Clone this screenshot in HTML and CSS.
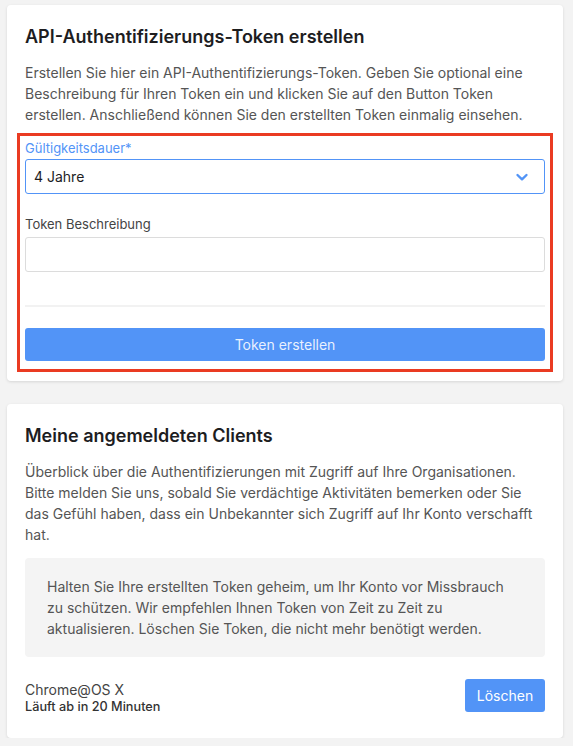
FILE: index.html
```html
<!DOCTYPE html>
<html lang="de">
    <head>
        <meta charset="UTF-8">
        <meta name="viewport" content="width=device-width, initial-scale=1.0">
        <title>API-Token</title>
        <link rel="stylesheet" href="styles.css">
    </head>
    <body>
        <section class="card">
            <h2 class="card-title">API-Authentifizierungs-Token erstellen</h2>
            <p class="card-text">Erstellen Sie hier ein API-Authentifizierungs-Token. Geben Sie optional eine Beschreibung für Ihren Token ein und klicken Sie auf den Button Token erstellen. Anschließend können Sie den erstellten Token einmalig einsehen.</p>

            <form class="token-form highlight">
                <div class="form-group">
                    <label for="duration" class="label-active">Gültigkeitsdauer*</label>
                    <div class="select-wrap">
                        <select id="duration" class="form-control select-active">
                            <option>4 Jahre</option>
                        </select>
                        <svg class="select-arrow" width="14" height="10" viewBox="0 0 14 10">
                            <path d="M2.5 3 L7 7.3 L11.5 3" fill="none" stroke="currentColor" stroke-width="2.4" stroke-linecap="round" stroke-linejoin="round"/>
                        </svg>
                    </div>
                </div>

                <div class="form-group">
                    <label for="description">Token Beschreibung</label>
                    <input type="text" id="description" class="form-control">
                </div>

                <hr class="divider">

                <button type="submit" class="btn btn-block">Token erstellen</button>
            </form>
        </section>

        <section class="card">
            <h2 class="card-title">Meine angemeldeten Clients</h2>
            <p class="card-text">Überblick über die Authentifizierungen mit Zugriff auf Ihre Organisationen. Bitte melden Sie uns, sobald Sie verdächtige Aktivitäten bemerken oder Sie das Gefühl haben, dass ein Unbekannter sich Zugriff auf Ihr Konto verschafft hat.</p>

            <div class="info-box">
                Halten Sie Ihre erstellten Token geheim, um Ihr Konto vor Missbrauch zu schützen. Wir empfehlen Ihnen Token von Zeit zu Zeit zu aktualisieren. Löschen Sie Token, die nicht mehr benötigt werden.
            </div>

            <div class="client-row">
                <div class="client-info">
                    <div class="client-name">Chrome@OS X</div>
                    <div class="client-expiry">Läuft ab in 20 Minuten</div>
                </div>
                <button type="button" class="btn btn-small">Löschen</button>
            </div>
        </section>
    </body>
</html>
```

FILE: styles.css
```css
:root {
    --primary: #5294f7;
    --text: #1d1d1f;
    --muted: #555;
    --border: #dcdcdc;
    --radius: 4px;
}

* {
    margin: 0;
    padding: 0;
    box-sizing: border-box;
}

body {
    font-family: Inter, "Noto Sans", sans-serif;
    background-color: #f3f3f3;
    color: var(--text);
    padding: 5px 10px 0 7px;
    display: flex;
    flex-direction: column;
    gap: 23px;
}

.card {
    background: #fff;
    border-radius: var(--radius);
    box-shadow: 0 1px 3px rgba(0, 0, 0, 0.12);
    padding: 20px 18px 23px;
}

.card-title {
    font-size: 18px;
    font-weight: 600;
    line-height: 24px;
    margin-bottom: 13px;
}

.card-text {
    font-size: 14px;
    line-height: 21px;
    color: var(--muted);
}

/* red frame around the token form */
.highlight {
    border: 3px solid #ea3b22;
    margin: 8px -8px -14px;
    padding: 5px 5px 8px;
}

.form-group {
    margin-bottom: 23px;
}

.form-group:last-of-type {
    margin-bottom: 0;
}

.form-group label {
    display: block;
    font-size: 13px;
    line-height: 15px;
    color: #444;
    margin-bottom: 5px;
}

.form-group .label-active {
    color: var(--primary);
    margin-bottom: 3px;
}

.form-control {
    width: 100%;
    height: 35px;
    border: 1px solid var(--border);
    border-radius: 3px;
    background: #fff;
    font-family: inherit;
    font-size: 14px;
    color: var(--text);
    padding: 0 8px;
    outline: none;
}

.select-wrap {
    position: relative;
}

select.form-control {
    appearance: none;
    -webkit-appearance: none;
}

.select-active {
    border-color: var(--primary);
}

.select-arrow {
    position: absolute;
    right: 16px;
    top: 13px;
    color: var(--primary);
}

.divider {
    border: none;
    border-top: 2px solid #f2f2f2;
    margin: 33px 0 21px;
}

.btn {
    background: var(--primary);
    color: #fff;
    border: none;
    border-radius: 3px;
    font-family: inherit;
    font-size: 14px;
    cursor: pointer;
}

.btn-block {
    width: 100%;
    height: 33px;
    color: rgba(255, 255, 255, 0.88);
}

.info-box {
    background: #f4f4f4;
    border-radius: var(--radius);
    padding: 18px 22px;
    margin-top: 13px;
    font-size: 14px;
    line-height: 21px;
    color: var(--muted);
}

.client-row {
    display: flex;
    justify-content: space-between;
    align-items: flex-start;
    margin-top: 22px;
}

.client-name {
    font-size: 14px;
    line-height: 19px;
    margin-top: 1px;
    color: #444;
}

.client-expiry {
    font-size: 12.7px;
    line-height: 16px;
    font-weight: 500;
    color: #333;
}

.btn-small {
    width: 80px;
    height: 33px;
}
```
